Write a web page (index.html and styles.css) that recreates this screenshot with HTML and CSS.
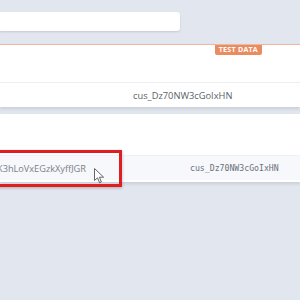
FILE: index.html
```html
<!DOCTYPE html>
<html>
<head>
<meta charset="utf-8">
<link rel="stylesheet" href="styles.css">
</head>
<body>
<div class="top">
  <div class="search"></div>
</div>
<div class="panel test">
  <span class="badge">TEST DATA</span>
  <div class="panel-head"></div>
  <div class="row">
    <span class="cust">cus_Dz70NW3cGoIxHN</span>
  </div>
</div>
<div class="panel second">
  <div class="panel-head tall"></div>
  <div class="row hl">
    <span class="pid">K3hLoVxEGzkXyffJGR</span>
    <span class="mono">cus_Dz70NW3cGoIxHN</span>
  </div>
</div>
<div class="highlight"></div>
<svg class="cursor" width="11" height="16" viewBox="0 0 11 16"><path d="M0.5 0.5 L0.5 12.5 L3.5 9.8 L5.6 14.8 L7.4 14 L5.4 9.2 L9.6 9.2 Z" fill="#fff" stroke="#666" stroke-width="1" stroke-linejoin="round"/></svg>
</body>
</html>
```
FILE: styles.css
```css
html, body {
  margin: 0;
  padding: 0;
}
body {
  background: #e2e6ee;
  font-family: "Open Sans", "Noto Sans", sans-serif;
  width: 300px;
  height: 300px;
  overflow: hidden;
  position: relative;
}
.top {
  height: 44px;
  padding-top: 12px;
  box-sizing: border-box;
}
.search {
  width: 180px;
  height: 19px;
  background: #fff;
  border-radius: 0 3px 3px 0;
  box-shadow: 0 1px 2px rgba(60, 70, 90, 0.18);
}
.panel {
  background: #fff;
  box-shadow: 0 2px 3px rgba(60, 70, 90, 0.15);
  position: relative;
}
.panel.test {
  border-top: 1px solid #f3b89b;
}
.badge {
  position: absolute;
  top: 0;
  right: 38px;
  background: #ea8c62;
  color: #fff;
  font-size: 7px;
  font-weight: 700;
  letter-spacing: 0.3px;
  line-height: 10px;
  padding: 0 4px;
  border-radius: 0 0 2px 2px;
}
.panel-head {
  height: 37px;
}
.panel-head.tall {
  height: 41px;
}
.row {
  height: 24px;
  border-top: 1px solid #eceef2;
  display: flex;
  align-items: center;
  font-size: 9.3px;
  color: #5a5f68;
}
.cust {
  margin-left: 133px;
}
.panel.second {
  margin-top: 7px;
  padding-bottom: 2px;
}
.row.hl {
  background: #f6f8fb;
  border-top: 1px solid #eef1f5;
  height: 24px;
  color: #7a7f88;
}
.pid {
  margin-left: -3px;
  font-size: 9.2px;
  width: 193px;
}
.mono {
  font-family: "DejaVu Sans Mono", monospace;
  font-size: 8.2px;
  color: #6c717a;
}
.highlight {
  position: absolute;
  left: -4px;
  top: 150px;
  width: 120px;
  height: 31px;
  border: 3px solid #e01e22;
  box-shadow: 0 1px 3px rgba(0, 0, 0, 0.25);
}
.cursor {
  position: absolute;
  left: 94px;
  top: 168px;
}
```
